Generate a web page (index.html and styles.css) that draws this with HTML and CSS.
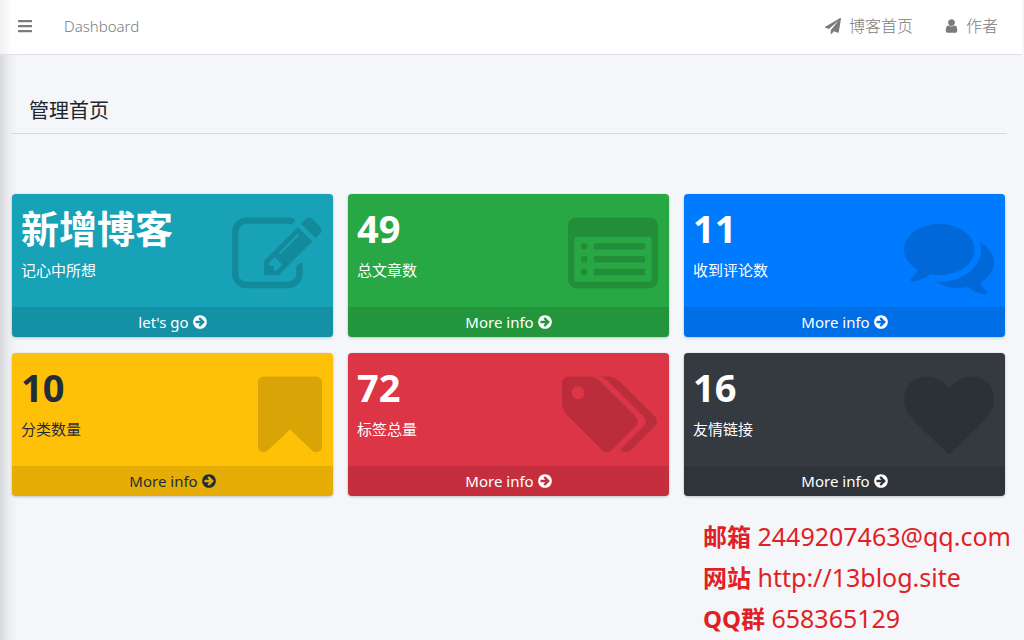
FILE: index.html
```html
<!DOCTYPE html>
<html lang="zh-CN">
<head>
<meta charset="utf-8">
<title>管理首页</title>
<link rel="stylesheet" href="styles.css">
</head>
<body>
<svg class="sprite" aria-hidden="true">
  <symbol id="arrow" viewBox="128 0 1536 1792"><path d="M1413 896q0-27-18-45l-91-91-362-362q-18-18-45-18t-45 18l-91 91q-18 18-18 45t18 45l189 189h-502q-26 0-45 19t-19 45v128q0 26 19 45t45 19h502l-189 189q-19 19-19 45t19 45l91 91q18 18 45 18t45-18l362-362 91-91q18-18 18-45zm251 0q0 209-103 385.5t-279.5 279.5-385.5 103-385.5-103-279.5-279.5-103-385.5 103-385.5 279.5-279.5 385.5-103 385.5 103 279.5 279.5 103 385.5z"/></symbol>
</svg>
<header class="navbar">
  <button class="menu-button" type="button" aria-label="菜单"><svg class="icon-bars" viewBox="0 0 448 512"><path d="M16 132h416c9 0 16-7 16-16V76c0-9-7-16-16-16H16C7 60 0 67 0 76v40c0 9 7 16 16 16zm0 160h416c9 0 16-7 16-16v-40c0-9-7-16-16-16H16c-9 0-16 7-16 16v40c0 9 7 16 16 16zm0 160h416c9 0 16-7 16-16v-40c0-9-7-16-16-16H16c-9 0-16 7-16 16v40c0 9 7 16 16 16z"/></svg></button>
  <a class="nav-link" href="#">Dashboard</a>
  <nav class="nav-right">
    <a class="nav-link" href="#"><svg class="icon-nav" viewBox="0 0 1792 1792"><path d="M1764 11q33 24 27 64l-256 1536q-5 29-32 45-14 8-31 8-11 0-24-5l-453-185-242 295q-18 23-49 23-13 0-22-4-19-7-30.5-23.5t-11.5-36.5v-349l864-1059-1069 925-395-162q-37-14-40-55-2-40 32-59l1664-960q15-9 32-9 20 0 36 11z"/></svg>博客首页</a>
    <a class="nav-link" href="#"><svg class="icon-nav icon-user" viewBox="256 0 1280 1792"><path d="M1536 1399q0 109-62.5 187t-150.5 78h-854q-88 0-150.5-78t-62.5-187q0-85 8.5-160.5t31.5-152 58.5-131 94-89 134.5-34.5q131 128 313 128t313-128q76 0 134.5 34.5t94 89 58.5 131 31.5 152 8.5 160.5zm-256-887q0 159-112.5 271.5t-271.5 112.5-271.5-112.5-112.5-271.5 112.5-271.5 271.5-112.5 271.5 112.5 112.5 271.5z"/></svg>作者</a>
  </nav>
</header>
<main class="content">
  <h1 class="page-title">管理首页</h1>
  <section class="boxes">
    <article class="box info">
      <div class="inner"><h2>新增博客</h2><p>记心中所想</p></div>
      <svg class="art" viewBox="0 0 1792 1792"><path d="M888 1184l116-116-152-152-116 116v56h96v96h56zm440-720q-16-16-33 1l-350 350q-17 17-1 33t33-1l350-350q17-17 1-33zm80 594v190q0 119-84.5 203.5t-203.5 84.5h-832q-119 0-203.5-84.5t-84.5-203.5v-832q0-119 84.5-203.5t203.5-84.5h832q63 0 117 25 15 7 18 23 3 17-9 29l-49 49q-14 14-32 8-23-6-45-6h-832q-66 0-113 47t-47 113v832q0 66 47 113t113 47h832q66 0 113-47t47-113v-126q0-13 9-22l64-64q15-15 35-7t20 29zm-96-738l288 288-672 672h-288v-288zm444 132l-92 92-288-288 92-92q28-28 68-28t68 28l152 152q28 28 28 68t-28 68z"/></svg>
      <a class="more" href="#">let's go <svg class="icon-arrow"><use href="#arrow"/></svg></a>
    </article>
    <article class="box success">
      <div class="inner"><h2>49</h2><p>总文章数</p></div>
      <svg class="art" viewBox="0 0 1792 1792"><path fill-rule="evenodd" d="M160 128h1472q66 0 113 47t47 113v1088q0 66-47 113t-113 47h-1472q-66 0-113-47t-47-113v-1088q0-66 47-113t113-47zm-32 416v832q0 32 32 32h1472q32 0 32-32v-832q0-32-32-32h-1472q-32 0-32 32zM288 640h64q32 0 32 32v64q0 32-32 32h-64q-32 0-32-32v-64q0-32 32-32zm0 256h64q32 0 32 32v64q0 32-32 32h-64q-32 0-32-32v-64q0-32 32-32zm0 256h64q32 0 32 32v64q0 32-32 32h-64q-32 0-32-32v-64q0-32 32-32zM544 640h960q32 0 32 32v64q0 32-32 32h-960q-32 0-32-32v-64q0-32 32-32zm0 256h960q32 0 32 32v64q0 32-32 32h-960q-32 0-32-32v-64q0-32 32-32zm0 256h960q32 0 32 32v64q0 32-32 32h-960q-32 0-32-32v-64q0-32 32-32z"/></svg>
      <a class="more" href="#">More info <svg class="icon-arrow"><use href="#arrow"/></svg></a>
    </article>
    <article class="box primary">
      <div class="inner"><h2>11</h2><p>收到评论数</p></div>
      <svg class="art" viewBox="0 0 1792 1792"><path d="M1408 768q0 139-94 257t-256.500 186.500-353.500 68.500q-86 0-176-16-124 88-278 128-36 9-86 16h-3q-11 0-20.500-8t-11.500-21q-1-3-1-6.500t.5-6.500 2-6l2.500-5 3.500-5.500 4-5 4.500-5 4-4.500q5-6 23-25t26-29.500 22.500-29 25-38.500 20.500-44q-124-72-195-177t-71-224q0-139 94-257t256.500-186.500 353.500-68.500 353.500 68.500 256.500 186.500 94 257zm384 256q0 120-71 224.500t-195 176.500q10 24 20.500 44t25 38.500 22.500 29 26 29.500 23 25q1 1 4 4.500t4.500 5 4 5 3.500 5.500l2.500 5 2 6 .5 6.500-1 6.500q-3 14-13 22t-22 7q-50-7-86-16-154-40-278-128-90 16-176 16-271 0-472-132 58 4 88 4 161 0 309-45t264-129q125-92 192-212t67-254q0-77-23-152 129 71 204 178t75 230z"/></svg>
      <a class="more" href="#">More info <svg class="icon-arrow"><use href="#arrow"/></svg></a>
    </article>
    <article class="box warning">
      <div class="inner"><h2>10</h2><p>分类数量</p></div>
      <svg class="art art-bookmark" viewBox="256 0 1280 1792"><path d="M1420 128q23 0 44 9 33 13 52.500 41t19.500 62v1289q0 34-19.500 62t-52.500 41q-19 8-44 8-48 0-83-32l-441-424-441 424q-36 33-83 33-23 0-44-9-33-13-52.500-41t-19.500-62v-1289q0-34 19.500-62t52.500-41q21-9 44-9h1048z"/></svg>
      <a class="more" href="#">More info <svg class="icon-arrow"><use href="#arrow"/></svg></a>
    </article>
    <article class="box danger">
      <div class="inner"><h2>72</h2><p>标签总量</p></div>
      <svg class="art art-tags" viewBox="0 0 1920 1792"><path d="M448 448q0-53-37.500-90.500t-90.500-37.500-90.500 37.500-37.500 90.500 37.500 90.500 90.500 37.500 90.500-37.500 37.500-90.500zm1067 576q0 53-37 90l-491 492q-39 37-91 37-53 0-90-37l-715-716q-38-37-64.500-101t-26.500-117v-416q0-52 38-90t90-38h416q53 0 117 26.500t102 64.500l715 714q37 39 37 91zm384 0q0 53-37 90l-491 492q-39 37-91 37-36 0-59-14t-53-45l470-470q37-37 37-90 0-52-37-91l-715-714q-38-38-102-64.500t-117-26.500h224q53 0 117 26.500t102 64.500l715 714q37 39 37 91z"/></svg>
      <a class="more" href="#">More info <svg class="icon-arrow"><use href="#arrow"/></svg></a>
    </article>
    <article class="box dark">
      <div class="inner"><h2>16</h2><p>友情链接</p></div>
      <svg class="art" viewBox="0 0 1792 1792"><path d="M896 1664q-26 0-44-18l-624-602q-10-8-27.500-26t-55.500-65.500-68-97.500-53.500-121-23.500-138q0-220 127-344t351-124q62 0 126.500 21.500t120 58 95.500 68.500 76 68q36-36 76-68t95.500-68.500 120-58 126.500-21.500q224 0 351 124t127 344q0 221-229 450l-623 600q-18 18-44 18z"/></svg>
      <a class="more" href="#">More info <svg class="icon-arrow"><use href="#arrow"/></svg></a>
    </article>
  </section>
  <address class="contact">
    <p><strong>邮箱</strong> 2449207463@qq.com</p>
    <p><strong>网站</strong> http://13blog.site</p>
    <p><strong>QQ群</strong> 658365129</p>
  </address>
</main>
</body>
</html>
```
FILE: styles.css
```css
* { box-sizing: border-box; }

body {
  margin: 0;
  min-height: 100vh;
  background: linear-gradient(to right, rgba(0, 0, 0, .12), rgba(0, 0, 0, .04) 8px, transparent 18px), #f4f6f9;
  color: #212529;
  font-family: "Noto Sans", "Noto Sans CJK SC", sans-serif;
  font-size: 15px;
  line-height: 24px;
}

h1, h2, p { margin: 0; }
a { color: inherit; text-decoration: none; }
svg { fill: currentColor; }
.sprite { display: none; }

.navbar {
  display: flex;
  align-items: center;
  height: 55px;
  margin-right: 2px;
  padding: 0 24px 2px 18px;
  background: linear-gradient(to right, rgba(0, 0, 0, .06), transparent 12px), #fff;
  border-bottom: 1px solid #dee2e6;
  color: #7b7b7b;
}

.menu-button {
  display: flex;
  margin-right: 32px;
  padding: 0;
  border: 0;
  background: none;
  color: inherit;
}

.icon-bars { width: 14px; height: 16px; }

.nav-link {
  display: flex;
  align-items: center;
  font-size: 15px;
  font-weight: 300;
}

.nav-right {
  display: flex;
  gap: 32px;
  margin-left: auto;
}

.nav-right .nav-link { font-size: 16px; }
.icon-nav { width: 16px; height: 16px; margin-right: 8px; }
.icon-user { width: 13px; }

.content { padding: 40px 17px 0 11px; }

.page-title {
  padding: 1px 18px 7px;
  border-bottom: 1px solid #d5d8dd;
  font-size: 20px;
  font-weight: 400;
  line-height: 30px;
}

.boxes {
  display: grid;
  grid-template-columns: repeat(3, 1fr);
  gap: 16px 15px;
  margin: 60px 2px 0 1px;
}

.box {
  position: relative;
  overflow: hidden;
  border-radius: 4px;
  box-shadow: 0 0 1px rgba(0, 0, 0, .13), 0 1px 3px rgba(0, 0, 0, .2);
  color: #fff;
}

.inner { padding: 10px 9px 25px; }

.box h2 {
  margin-bottom: 6px;
  font-size: 38px;
  font-weight: 700;
  line-height: 48px;
}

.box p { font-size: 15px; }

.art {
  position: absolute;
  top: 17px;
  right: 11px;
  width: 90px;
  height: 90px;
  color: rgba(0, 0, 0, .15);
}

.art-bookmark { width: 64px; }
.art-tags { width: 96px; }

.more {
  display: flex;
  justify-content: center;
  align-items: center;
  gap: 4px;
  height: 30px;
  background: rgba(0, 0, 0, .1);
}

.icon-arrow { width: 14px; height: 16px; }

.info { background: #17a2b8; }
.success { background: #28a745; }
.primary { background: #007bff; }
.warning { background: #ffc107; color: #1f2d3d; }
.danger { background: #dc3545; }
.dark { background: #343a40; }

.contact {
  width: 304px;
  margin: 20px 0 0 auto;
  color: #e01f26;
  font-size: 25px;
  font-style: normal;
  line-height: 41px;
  white-space: nowrap;
}

.contact strong {
  font-size: 24px;
  font-weight: 700;
}
```
